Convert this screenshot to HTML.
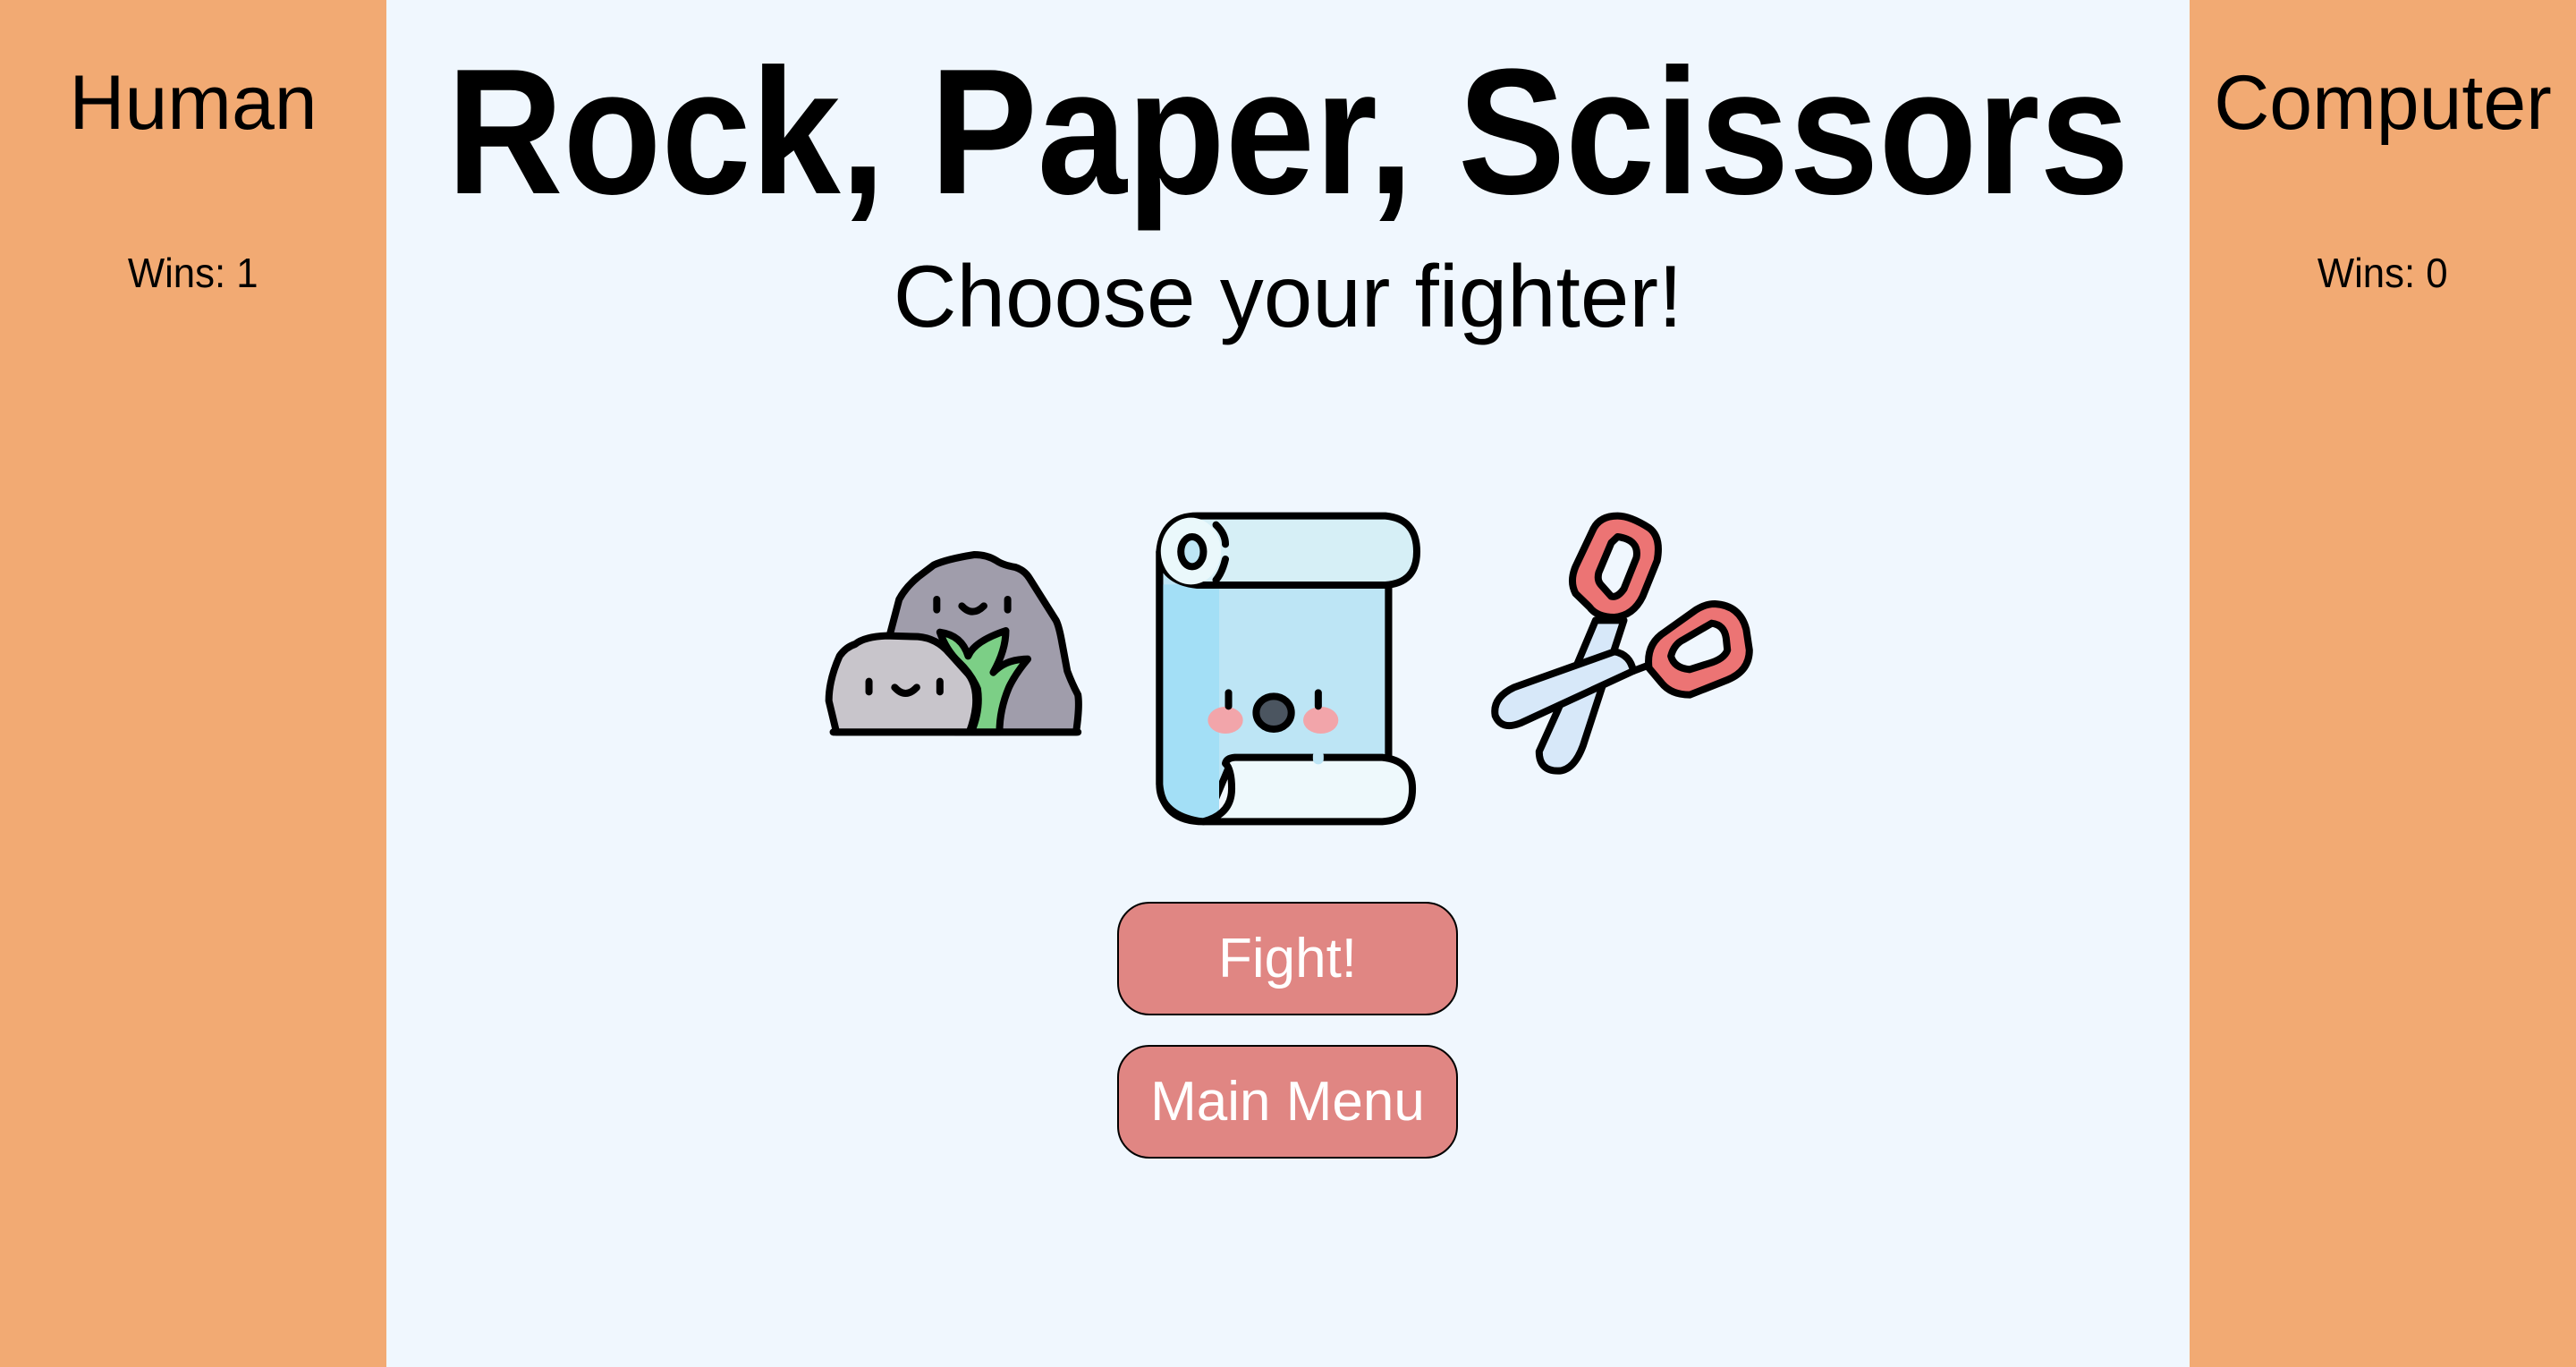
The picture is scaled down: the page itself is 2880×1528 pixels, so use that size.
<!DOCTYPE html>
<html><head><meta charset="utf-8"><style>
html,body{margin:0;padding:0;width:2880px;height:1528px;overflow:hidden;background:#f0f7fe;font-family:"Liberation Sans",sans-serif;}
.panel{position:absolute;top:0;width:432px;height:1528px;background:#f2aa73;text-align:center;color:#000;}
.panel h2{position:absolute;top:72px;left:0;width:100%;margin:0;font-weight:normal;font-size:86px;line-height:1;}
.panel .w{position:absolute;top:282px;left:0;width:100%;font-size:46px;line-height:1;}
.panel .w span{display:inline-block;transform:scaleX(0.95);}
.title{position:absolute;left:0;width:2880px;text-align:center;top:48px;font-size:200px;font-weight:bold;line-height:1;white-space:nowrap;}
.title span{display:inline-block;transform:scaleX(0.9);transform-origin:center;}
.sub{position:absolute;left:0;width:2880px;text-align:center;top:282px;font-size:98px;line-height:1;}
.btn{position:absolute;left:1249px;width:381px;height:127px;background:#e08683;border:2px solid #000;border-radius:36px;color:#fff;font-size:62px;text-align:center;line-height:123px;box-sizing:border-box;}
</style></head><body>
<div class="panel" style="left:0"><h2>Human</h2><div class="w"><span>Wins: 1</span></div></div>
<div class="panel" style="left:2448px;width:432px"><h2>Computer</h2><div class="w"><span>Wins: 0</span></div></div>
<div class="title"><span>Rock, Paper, Scissors</span></div>
<div class="sub">Choose your fighter!</div>

<svg style="position:absolute;left:900px;top:560px" width="1100" height="380" viewBox="0 0 1568 1140" preserveAspectRatio="none">
<g stroke="#000" stroke-width="8" vector-effect="non-scaling-stroke" stroke-linejoin="round" stroke-linecap="round">
<path vector-effect="non-scaling-stroke" fill="#a09dab" d="M135,450 L150,330 Q160,290 180,255 L205,215 Q225,195 270,180 Q290,180 305,200 Q315,215 335,222 Q350,232 358,260 L400,400 Q405,420 410,480 L418,570 Q425,610 435,650 Q438,690 432,775 L240,775 Z"/>
<path vector-effect="non-scaling-stroke" fill="#c8c5cb" d="M50,775 L38,670 Q38,600 55,520 Q65,490 80,480 Q95,455 130,452 L180,455 Q210,460 230,510 L260,580 Q275,620 272,690 Q270,730 262,775 Z"/>
<path vector-effect="non-scaling-stroke" fill="#7ccf86" d="M265,775 Q280,700 275,630 Q265,580 245,540 Q225,500 215,440 Q250,450 260,520 Q270,470 320,435 Q320,500 300,575 Q320,530 355,530 Q335,580 325,625 Q310,700 310,775 Z"/>
<path vector-effect="non-scaling-stroke" fill="none" d="M45,775 L435,775"/>
<path vector-effect="non-scaling-stroke" fill="none" d="M210,330 L210,365 M323,330 L323,365 M250,352 Q267,390 285,352 M102,605 L102,640 M215,605 L215,640 M143,625 Q160,665 178,625"/>
<path vector-effect="non-scaling-stroke" fill="#bde5f5" d="M565,170 L930,170 L930,870 L680,870 L640,1070 Q565,1060 565,950 Z"/>
<path fill="#a3dff6" stroke="none" d="M570,280 L660,280 L660,1040 L640,1065 Q572,1050 570,950 Z"/>
<path vector-effect="non-scaling-stroke" fill="none" d="M565,170 L565,950 Q570,1075 635,1075 M930,280 L930,860"/>
<path vector-effect="non-scaling-stroke" fill="#d6eff6" d="M625,50 L925,50 Q975,60 975,170 Q975,275 925,282 L625,282 Q568,270 565,170 Q570,50 625,50 Z"/>
<ellipse vector-effect="non-scaling-stroke" cx="615" cy="168" rx="48" ry="112" fill="#eaf8fb" stroke="none"/>
<path vector-effect="non-scaling-stroke" fill="none" d="M655,80 Q670,110 670,145 M670,195 Q665,240 655,265"/>
<ellipse vector-effect="non-scaling-stroke" cx="617" cy="170" rx="18" ry="50" fill="#bde5f5"/>
<path vector-effect="non-scaling-stroke" fill="#eef9fc" d="M685,860 L920,860 Q968,870 968,965 Q968,1070 920,1075 L635,1075 Q680,1050 680,965 Q680,900 670,880 Q672,862 685,860 Z"/>
<path stroke="#bde5f5" stroke-width="12" vector-effect="non-scaling-stroke" d="M818,855 L818,865"/>
<ellipse cx="670" cy="735" rx="28" ry="45" fill="#f2a5aa" stroke="none"/>
<ellipse cx="822" cy="735" rx="28" ry="45" fill="#f2a5aa" stroke="none"/>
<path vector-effect="non-scaling-stroke" fill="none" d="M675,643 L675,688 M818,643 L818,688"/>
<ellipse vector-effect="non-scaling-stroke" cx="747" cy="710" rx="28" ry="55" fill="#4b5560"/>
<path vector-effect="non-scaling-stroke" fill="#d7e8f9" d="M1260,400 L1305,400 L1240,820 Q1225,905 1200,905 Q1170,905 1170,840 L1200,700 Z"/>
<path vector-effect="non-scaling-stroke" fill="#d7e8f9" d="M1290,505 Q1315,515 1320,570 L1140,745 Q1110,770 1100,720 Q1095,660 1130,625 Z"/>
<path vector-effect="non-scaling-stroke" fill="none" d="M1320,570 L1345,550"/>
<path vector-effect="non-scaling-stroke" fill="#ec7474" d="M1295,50 Q1315,50 1345,90 Q1365,120 1358,200 L1335,320 Q1320,385 1290,390 Q1262,390 1250,355 L1228,310 Q1218,270 1228,220 L1255,100 Q1265,50 1295,50 Z"/>
<path vector-effect="non-scaling-stroke" fill="#f0f7fe" d="M1295,120 Q1330,130 1325,190 L1305,295 Q1295,325 1285,320 L1268,280 Q1262,265 1265,240 L1285,140 Z"/>
<path vector-effect="non-scaling-stroke" fill="#ec7474" d="M1450,345 Q1490,350 1500,430 L1505,500 Q1505,570 1470,600 L1410,650 Q1380,650 1365,610 L1345,560 Q1340,480 1370,440 L1420,365 Q1435,345 1450,345 Z"/>
<path vector-effect="non-scaling-stroke" fill="#f0f7fe" d="M1445,410 Q1465,415 1468,460 L1470,500 Q1465,530 1440,545 L1410,565 Q1385,560 1380,520 Q1385,480 1400,465 Z"/>
</g>
</svg>

<div class="btn" style="top:1008px">Fight!</div>
<div class="btn" style="top:1168px">Main Menu</div>
</body></html>
